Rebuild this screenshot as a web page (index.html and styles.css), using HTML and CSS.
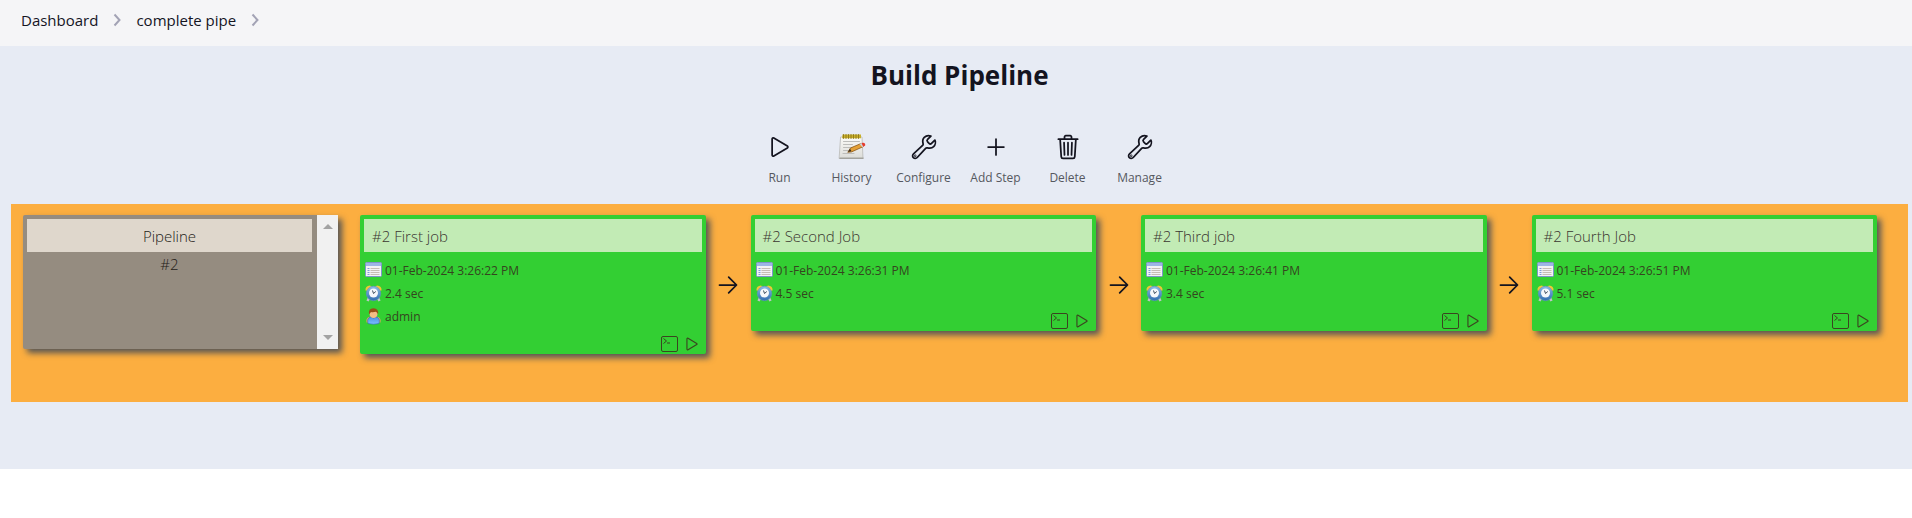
FILE: index.html
```html
<!DOCTYPE html>
<html lang="en">
<head>
<meta charset="utf-8">
<meta name="viewport" content="width=device-width, initial-scale=1">
<title>Build Pipeline</title>
<link rel="stylesheet" href="styles.css">
</head>
<body>
<svg class="sprite" aria-hidden="true">
  <defs>
    <linearGradient id="face" x1="0" y1="0" x2="0" y2="1"><stop offset="0" stop-color="#8dbbe6"/><stop offset="1" stop-color="#2f6cb0"/></linearGradient>
    <linearGradient id="shirt" x1="0" y1="0" x2="0" y2="1"><stop offset="0" stop-color="#4a8fe2"/><stop offset="1" stop-color="#7cc0ff"/></linearGradient>
    <linearGradient id="paper" x1="0" y1="0" x2="0" y2="1"><stop offset="0" stop-color="#fbfbf8"/><stop offset="1" stop-color="#dcdcd8"/></linearGradient>
  </defs>
  <symbol id="play" viewBox="0 0 512 512"><path d="M112 111v290c0 17.44 17 28.52 31 20.16l247.9-148.37c12.12-7.25 12.12-26.33 0-33.58L143 90.84c-14-8.36-31 2.72-31 20.16z"/></symbol>
  <symbol id="wrench" viewBox="0 0 512 512"><path d="M393.87 190a32.1 32.1 0 01-45.25 0l-26.57-26.57a32.09 32.09 0 010-45.26L382.19 58a1 1 0 00-.3-1.64c-38.82-16.64-89.15-8.16-121.11 23.57-30.58 30.35-32.32 76-21.12 115.84a31.93 31.93 0 01-9.06 32.08L64 380a48.17 48.17 0 1068 68l153.86-167a31.93 31.93 0 0131.6-9.13c39.54 10.59 84.54 8.6 114.72-21.19 32.49-32 39.5-88.56 23.75-120.93a1 1 0 00-1.6-.26z"/><circle cx="96" cy="416" r="6"/></symbol>
  <symbol id="plus" viewBox="0 0 512 512"><path d="M256 112v288M400 256H112"/></symbol>
  <symbol id="trash" viewBox="0 0 512 512"><path d="M112 112l20 320c.95 18.49 14.4 32 32 32h184c17.67 0 30.87-13.51 32-32l20-320M80 112h352M192 112V72a23.93 23.93 0 0124-24h80a23.93 23.93 0 0124 24v40M256 176v224M184 176l8 224M328 176l-8 224"/></symbol>
  <symbol id="arrow" viewBox="0 0 512 512"><path d="M268 112l144 144-144 144M404 256H100"/></symbol>
  <symbol id="chevron" viewBox="0 0 8 14"><path d="M1.500 1.500L6.500 7l-5 5.500"/></symbol>
  <symbol id="console" viewBox="0 0 18 18"><rect x=".5" y="1.500" width="16" height="15" rx="1.500"/><path d="M2.500 3.500l3 2.500-3 2.500M6 8h3"/></symbol>
  <symbol id="notepad" viewBox="0 0 28 28">
    <path d="M3 4h21l1 21.500H1.500z" fill="url(#paper)" stroke="#b9b9b5" stroke-width=".8"/>
    <path d="M1.500 24.500h24v1.500h-24z" fill="#a2a29d"/>
    <path d="M4.500 1.500h18.500v3.700H4z" fill="#c9b02b"/>
    <path d="M5.500 1.500v4M8 1.500v4M10.500 1.500v4M13 1.500v4M15.500 1.500v4M18 1.500v4M20.500 1.500v4" stroke="#857018" stroke-width=".8"/>
    <path d="M5.500 8.500h16M5.500 11.500h9M5.500 14.500h10M5.500 17.500h5M5 20.500h11" stroke="#bdbdba"/>
    <path d="M10 19l2.500-4L23 10.500l2.500 3L14 18.700z" fill="#e5a136" stroke="#8a5716" stroke-width=".8"/>
    <path d="M10 19l2-3.200 1.500 2.500z" fill="#3c3020"/>
    <path d="M21.500 11l2.300-1.200q3.200.5 3 3l-2.500 1.400z" fill="#cfd3d8"/>
    <path d="M23.500 10q4-1.200 3.700 2.500l-2 1.200z" fill="#e63c2e"/>
  </symbol>
  <symbol id="calendar" viewBox="0 0 17 17">
    <rect x=".5" y=".5" width="16" height="14" rx="1" fill="#f3f2f5" stroke="#7f94c8"/>
    <path d="M1 1h15v3H1z" fill="#9eb5e6"/>
    <path d="M2.500 6.500h2M2.500 8.500h2M2.500 10.500h2M2.500 12.500h2" stroke="#7d9bd8"/>
    <path d="M5.500 6.500h9M5.500 8.500h9M5.500 10.500h9M5.500 12.500h9" stroke="#c7bdb5"/>
  </symbol>
  <symbol id="clock" viewBox="0 0 17 17">
    <path d="M4 13l-1.500 3M13 13l1.500 3" stroke="#bfc4c9" stroke-width="2.500"/>
    <path d="M.5 5.500Q0 1 5 .5l2 1.500L2.500 6zM16.500 5.500Q17 1 12 .5l-2 1.500L14.500 6z" fill="#f0c737"/>
    <circle cx="8.500" cy="8.500" r="7.200" fill="url(#face)" stroke="#5e91c5" stroke-width=".6"/>
    <circle cx="8.500" cy="8" r="4.500" fill="#f5f8fb"/>
    <path d="M7.500 5.500l1 3 2.300-2" fill="none" stroke="#3c4b5c"/>
  </symbol>
  <symbol id="person" viewBox="0 0 17 17">
    <path d="M1.500 14.500Q.5 9 6 8.500h5q5.500.5 4.500 6z" fill="#e8a262"/>
    <path d="M3 15.500Q1.500 9.500 6 9q2.500 2 5 0 4.500.5 3 6.500-5.500 1.500-11 0z" fill="url(#shirt)" stroke="#2f68b5" stroke-width=".6"/>
    <ellipse cx="8.500" cy="5.700" rx="4" ry="4.300" fill="#f4bd85"/>
    <path d="M4 6.500Q3 .3 8.500.2q5.500.2 4.600 6.300-.8-2.300-2.300-2.800-3 .8-4.800.2z" fill="#964f16"/>
  </symbol>
</svg>

<nav class="breadcrumbs" aria-label="Breadcrumb">
  <a href="#">Dashboard</a>
  <svg class="chevron" aria-hidden="true"><use href="#chevron"/></svg>
  <a href="#">complete pipe</a>
  <svg class="chevron" aria-hidden="true"><use href="#chevron"/></svg>
</nav>

<main class="page">
  <h1 class="title">Build Pipeline</h1>

  <div class="toolbar">
    <a class="tool" href="#"><svg class="icon"><use href="#play"/></svg><span>Run</span></a>
    <a class="tool" href="#"><svg class="icon picture"><use href="#notepad"/></svg><span>History</span></a>
    <a class="tool" href="#"><svg class="icon"><use href="#wrench"/></svg><span>Configure</span></a>
    <a class="tool" href="#"><svg class="icon"><use href="#plus"/></svg><span>Add Step</span></a>
    <a class="tool" href="#"><svg class="icon"><use href="#trash"/></svg><span>Delete</span></a>
    <a class="tool" href="#"><svg class="icon"><use href="#wrench"/></svg><span>Manage</span></a>
  </div>

  <section class="pipeline">
    <div class="revision">
      <div class="revision-body">
        <h2 class="revision-title">Pipeline</h2>
        <div class="revision-number">#2</div>
      </div>
      <div class="scroll" aria-hidden="true"><span class="up"></span><span class="down"></span></div>
    </div>

    <div class="jobs">
      <article class="job">
        <h2 class="job-title">#2 First job</h2>
        <ul class="facts">
          <li><svg class="mini"><use href="#calendar"/></svg>01-Feb-2024 3:26:22 PM</li>
          <li><svg class="mini"><use href="#clock"/></svg>2.4 sec</li>
          <li><svg class="mini"><use href="#person"/></svg>admin</li>
        </ul>
        <div class="actions">
          <button type="button" aria-label="Console"><svg class="console"><use href="#console"/></svg></button>
          <button type="button" aria-label="Run"><svg class="rerun"><use href="#play"/></svg></button>
        </div>
      </article>
      <div class="link"><svg class="icon"><use href="#arrow"/></svg></div>
      <article class="job">
        <h2 class="job-title">#2 Second Job</h2>
        <ul class="facts">
          <li><svg class="mini"><use href="#calendar"/></svg>01-Feb-2024 3:26:31 PM</li>
          <li><svg class="mini"><use href="#clock"/></svg>4.5 sec</li>
        </ul>
        <div class="actions">
          <button type="button" aria-label="Console"><svg class="console"><use href="#console"/></svg></button>
          <button type="button" aria-label="Run"><svg class="rerun"><use href="#play"/></svg></button>
        </div>
      </article>
      <div class="link"><svg class="icon"><use href="#arrow"/></svg></div>
      <article class="job">
        <h2 class="job-title">#2 Third job</h2>
        <ul class="facts">
          <li><svg class="mini"><use href="#calendar"/></svg>01-Feb-2024 3:26:41 PM</li>
          <li><svg class="mini"><use href="#clock"/></svg>3.4 sec</li>
        </ul>
        <div class="actions">
          <button type="button" aria-label="Console"><svg class="console"><use href="#console"/></svg></button>
          <button type="button" aria-label="Run"><svg class="rerun"><use href="#play"/></svg></button>
        </div>
      </article>
      <div class="link"><svg class="icon"><use href="#arrow"/></svg></div>
      <article class="job">
        <h2 class="job-title">#2 Fourth Job</h2>
        <ul class="facts">
          <li><svg class="mini"><use href="#calendar"/></svg>01-Feb-2024 3:26:51 PM</li>
          <li><svg class="mini"><use href="#clock"/></svg>5.1 sec</li>
        </ul>
        <div class="actions">
          <button type="button" aria-label="Console"><svg class="console"><use href="#console"/></svg></button>
          <button type="button" aria-label="Run"><svg class="rerun"><use href="#play"/></svg></button>
        </div>
      </article>
    </div>
  </section>
</main>
</body>
</html>
```
FILE: styles.css
```css
* { box-sizing: border-box; }

body {
  margin: 0;
  background: #fff;
  color: #14141f;
  font-family: "Open Sans", "Noto Sans", sans-serif;
  font-size: 12px;
}

a { color: inherit; text-decoration: none; }
h1, h2, ul { margin: 0; padding: 0; }
ul { list-style: none; }
.sprite { position: absolute; width: 0; height: 0; }

.breadcrumbs {
  display: flex;
  align-items: center;
  gap: 15px;
  padding: 8px 21px 14px;
  background: #f5f5f7;
  font-size: 15px;
  line-height: 24px;
}

.chevron {
  width: 8px;
  height: 14px;
  fill: none;
  stroke: #a3a3b5;
  stroke-width: 2;
}

.page {
  padding: 11px 4px 67px 11px;
  background: #e7ebf4;
}

.title {
  font-size: 26px;
  line-height: 36px;
  font-weight: 700;
  text-align: center;
}

.toolbar {
  display: flex;
  justify-content: center;
  padding: 40px 0 17px;
}

.tool {
  display: flex;
  flex-direction: column;
  align-items: center;
  gap: 8px;
  width: 72px;
  line-height: 18px;
  color: #55585f;
}

.icon {
  width: 28px;
  height: 28px;
  fill: none;
  stroke: #14141f;
  stroke-width: 32;
  stroke-linecap: round;
  stroke-linejoin: round;
}

.picture { stroke: none; stroke-width: 1; }

.pipeline {
  display: flex;
  align-items: flex-start;
  gap: 22px;
  padding: 11px 31px 48px 12px;
  background: #fcae40;
}

.revision {
  display: flex;
  flex: 0 0 315px;
  height: 134px;
  border-radius: 2px 0 0 2px;
  background: #958c80;
  box-shadow: 4px 4px 6px #555;
  color: #241c18;
  font-size: 15px;
  text-align: center;
}

.revision-body { flex: 1; padding: 4px 5px 4px 4px; }

.revision-title {
  padding: 6px 5px 4px;
  background: #dfd7cc;
  font-size: 15px;
  line-height: 23px;
  font-weight: 300;
}

.revision-number { line-height: 24px; font-weight: 300; }

.scroll {
  display: flex;
  flex-direction: column;
  justify-content: space-between;
  align-items: center;
  width: 21px;
  padding: 9px 0;
  background: #f1f1f1;
}

.up, .down { border: 5px solid transparent; border-top-width: 0; border-bottom-color: #a3a3a3; }
.down { border-top: 5px solid #a3a3a3; border-bottom-width: 0; }

.jobs { display: flex; align-items: flex-start; flex: 1; }

.job {
  flex: 1;
  min-width: 0;
  padding: 4px 4px 0;
  border-radius: 2px;
  background: #33cf33;
  box-shadow: 4px 4px 6px #555;
  color: #35451f;
}

.job-title {
  padding: 6px 8px 4px;
  background: #c2ebb5;
  color: #3a3530;
  font-size: 15px;
  line-height: 23px;
  font-weight: 300;
}

.facts { padding: 7px 1px 0; }
.facts li {
  display: flex;
  align-items: center;
  gap: 3px;
  height: 23px;
}
.mini { width: 17px; height: 17px; }

.actions {
  display: flex;
  justify-content: flex-end;
  align-items: center;
  gap: 4px;
  padding: 7px 1px 1px 0;
}
.actions button { display: flex; padding: 0; border: 0; background: none; }
.console, .rerun { width: 18px; height: 18px; fill: none; stroke: #3a4520; }
.rerun { stroke-width: 32; stroke-linejoin: round; }

.link {
  display: flex;
  justify-content: center;
  width: 45px;
  padding-top: 56px;
}
```
